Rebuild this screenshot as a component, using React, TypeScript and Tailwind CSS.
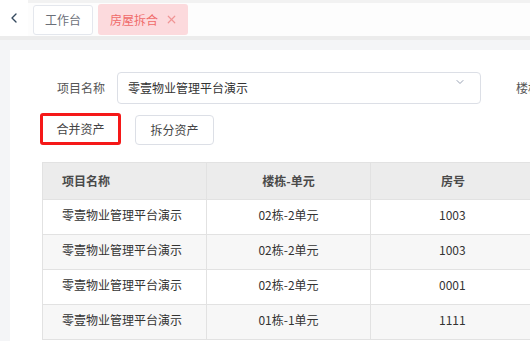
import React from 'react';
import { ChevronLeft, ChevronDown, X } from 'lucide-react';

const ROWS = [
  { project: '零壹物业管理平台演示', unit: '02栋-2单元', room: '1003' },
  { project: '零壹物业管理平台演示', unit: '02栋-2单元', room: '1003' },
  { project: '零壹物业管理平台演示', unit: '02栋-2单元', room: '0001' },
  { project: '零壹物业管理平台演示', unit: '01栋-1单元', room: '1111' },
];

export default function App() {
  return (
    <div
      className="w-[530px] h-[341px] overflow-hidden bg-[#f4f5f7] flex flex-col text-[12px] text-[#333]"
      style={{ fontFamily: '"Noto Sans CJK SC", "Noto Sans", sans-serif' }}
    >
      {/* tab bar */}
      <div className="h-[36px] shrink-0 bg-white flex">
        <div className="w-[28px] flex items-center justify-center">
          <ChevronLeft className="h-4 w-4 text-[#34495e]" strokeWidth={2} />
        </div>
        <div className="flex-1 flex items-start gap-[5px] pl-[5px] pt-[4px] border-t-[3px] border-[#f2f2f2] bg-[#fdfdfd]">
          <div className="w-[60px] h-[30px] -mt-[2px] border border-[#e4e7ed] rounded-[3px] bg-white flex items-center justify-center text-[#6b6f78]">
            工作台
          </div>
          <div className="w-[90px] h-[31px] -mt-[3px] rounded-[3px] bg-[#fcdadd] flex items-center pl-[12px] gap-[7px] text-[#f06a6a]">
            房屋拆合
            <X className="h-[13px] w-[13px] text-[#f09595]" strokeWidth={2.2} />
          </div>
        </div>
      </div>
      <div className="h-[4px] shrink-0 bg-[#ececec]" />

      {/* content */}
      <div className="flex-1 min-h-0 pt-[10px] pl-[10px]">
        <div className="h-full bg-white pl-[30px] pt-[22px] overflow-hidden">
          {/* search form */}
          <div className="flex items-center h-[32px]">
            <div className="w-[77px] shrink-0 pr-[12px] text-right text-[#555]">项目名称</div>
            <div className="relative shrink-0 w-[364px] h-[32px] border border-[#dcdfe6] rounded-[4px] flex items-center pl-[10px] text-[#333]">
              零壹物业管理平台演示
              <ChevronDown className="absolute right-[14px] top-[3px] h-[12px] w-[12px] text-[#9aa3b5]" strokeWidth={2} />
            </div>
            <div className="ml-[35px] shrink-0 whitespace-nowrap text-[#555]">楼栋单元</div>
          </div>

          {/* actions */}
          <div className="flex items-end gap-[14px] mt-[9px]">
            <button className="w-[81px] h-[32px] border-[3px] border-[#f51818] rounded-[3px] bg-white text-[#444]">
              合并资产
            </button>
            <button className="w-[79px] h-[30px] border border-[#dcdfe6] rounded-[4px] bg-white text-[#444]">
              拆分资产
            </button>
          </div>

          {/* table */}
          <div className="mt-[17px] ml-[2px] w-[520px]">
            <table className="table-fixed border-collapse border border-[#e2e2e2] w-[520px]">
              <colgroup>
                <col className="w-[164px]" />
                <col className="w-[164px]" />
                <col className="w-[192px]" />
              </colgroup>
              <thead>
                <tr className="h-[37px] bg-[#ececec] text-[#4a4a4a]">
                  <th className="border border-[#e2e2e2] text-left pl-[19px] font-semibold">项目名称</th>
                  <th className="border border-[#e2e2e2] text-center font-semibold">楼栋-单元</th>
                  <th className="border border-[#e2e2e2] text-left pl-[70px] font-semibold">房号</th>
                </tr>
              </thead>
              <tbody>
                {ROWS.map((r, i) => (
                  <tr key={i} className={`h-[35px] ${i % 2 === 1 ? 'bg-[#f7f7f7]' : 'bg-white'}`}>
                    <td className="border border-[#e2e2e2] pl-[19px] pb-[4px]">{r.project}</td>
                    <td className="border border-[#e2e2e2] text-center pb-[4px]">{r.unit}</td>
                    <td className="border border-[#e2e2e2] text-left pl-[68px] pb-[4px]">{r.room}</td>
                  </tr>
                ))}
              </tbody>
            </table>
          </div>
        </div>
      </div>
    </div>
  );
}
